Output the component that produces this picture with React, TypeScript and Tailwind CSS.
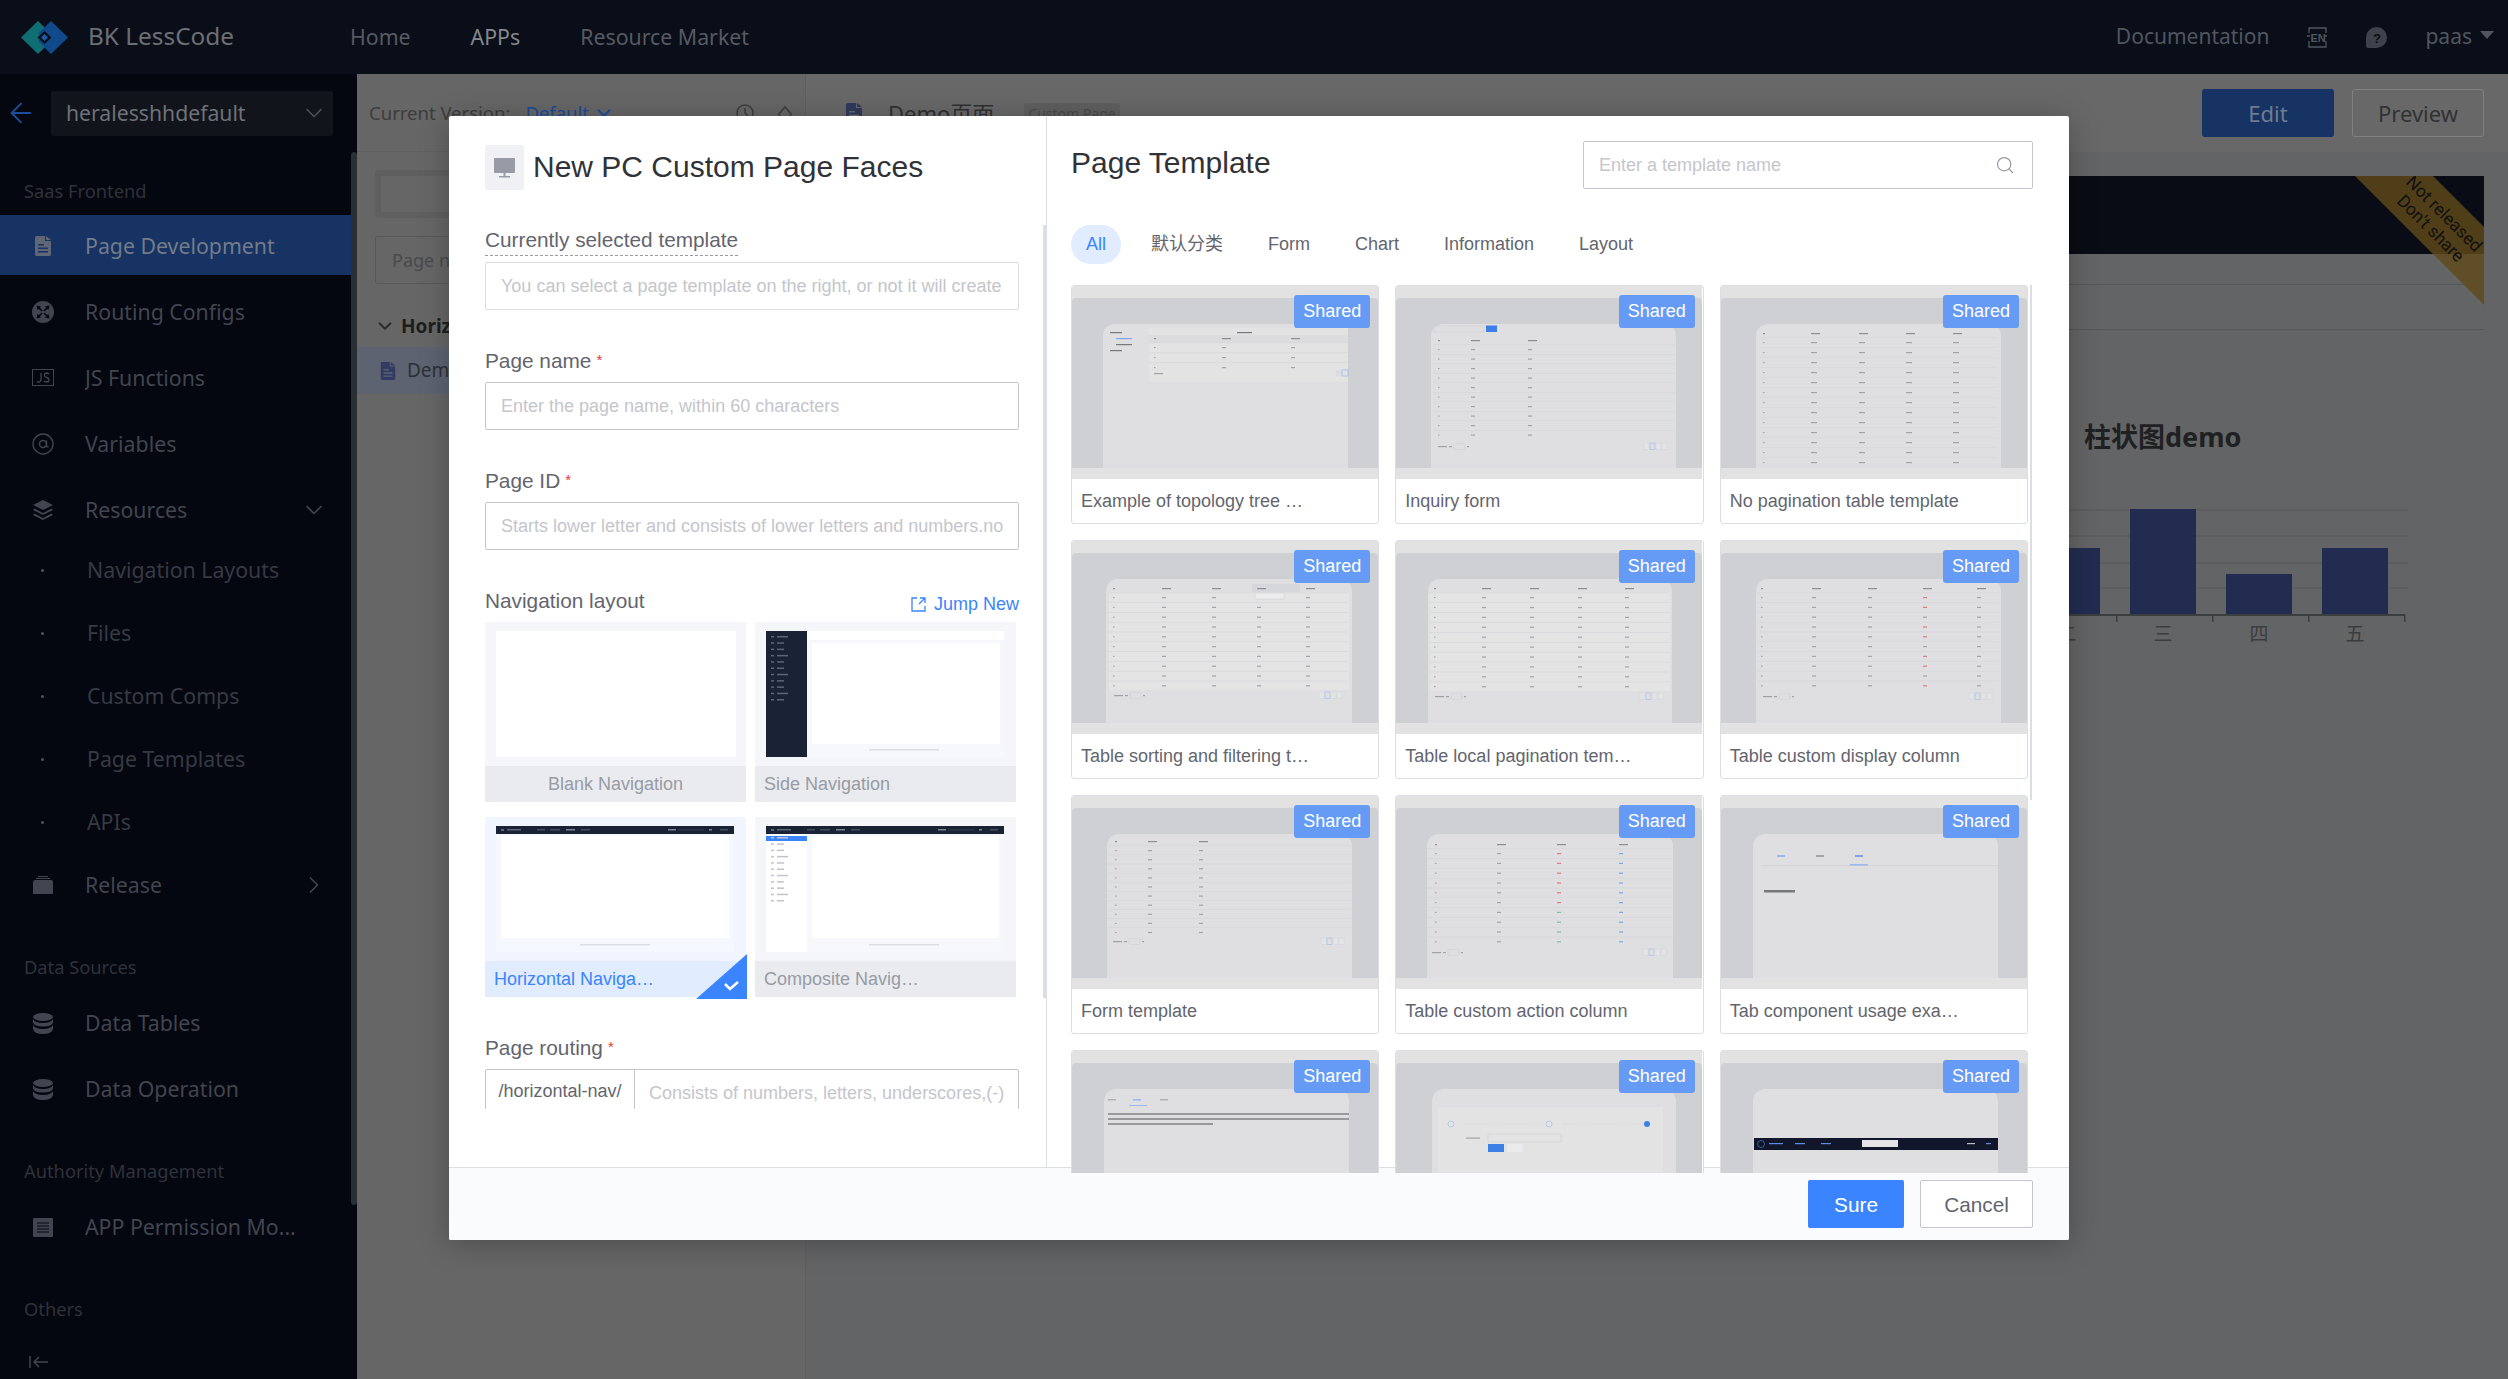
import React from "react";
import { ChevronDown, ChevronRight, ArrowLeft, Search } from "lucide-react";

const Doc = ({ c = "#5f6675", s = 20, ink = "#163363" }: { c?: string; s?: number; ink?: string }) => (
  <svg width={s} height={s} viewBox="0 0 16 20" fill={c}>
    <path d="M0 1.500A1.500 1.500 0 0 1 1.500 0H10v5h6v13.500a1.500 1.500 0 0 1-1.500 1.500h-13A1.500 1.500 0 0 1 0 18.500z" />
    <path d="M11 0l5 4h-5z" />
    <path d="M3 8h6v1.500H3zM3 11.500h10V13H3zM3 15h10v1.500H3z" fill={ink} />
  </svg>
);
const c = "#41454f";
const bg = "#04070f";
const Routing = () => (
  <svg width="22" height="22" viewBox="0 0 22 22">
    <circle cx="11" cy="11" r="11" fill={c} />
    <path d="M4.500 4.500l4.500 1-3.500 3.500zM17.500 4.500l-1 4.500-3.500-3.500zM4.500 17.500l1-4.500 3.500 3.500zM17.500 17.500l-4.500-1 3.500-3.500z" fill={bg} />
    <path d="M7 7l3 3M15 7l-3 3M7 15l3-3M15 15l-3-3" stroke={bg} strokeWidth="1.600" />
  </svg>
);
const Js = () => (
  <svg width="22" height="18" viewBox="0 0 22 18">
    <rect x=".5" y=".5" width="21" height="16" fill="none" stroke={c} />
    <path d="M9 4v6.500q0 2.500-2.500 2.500H5M17 5q-1-1-2.500-1-2 0-2 2t2.200 2.500 2.300 2.500q0 2-2.300 2-1.700 0-2.700-1" fill="none" stroke={c} strokeWidth="1.300" />
  </svg>
);
const At = () => (
  <svg width="22" height="22" viewBox="0 0 22 22" fill="none" stroke={c} strokeWidth="1.400">
    <circle cx="11" cy="11" r="10" />
    <circle cx="11" cy="11" r="3.500" />
    <path d="M14.500 7.500v5q0 2 2 1" />
  </svg>
);
const Layers = () => (
  <svg width="22" height="21" viewBox="0 0 22 21" fill={c}>
    <path d="M11 0l10 5-10 5L1 5z" />
    <path d="M2.500 8.500L11 13l8.500-4.500L21 10l-10 5L1 10z" />
    <path d="M2.500 13.500L11 18l8.500-4.500L21 15l-10 5L1 15z" />
  </svg>
);
const Box = () => (
  <svg width="20" height="18" viewBox="0 0 20 18" fill={c}>
    <rect x="5" y="0" width="10" height="1" />
    <rect x="3" y="2" width="14" height="1" />
    <path d="M0 6a2 2 0 0 1 2-2h16a2 2 0 0 1 2 2v12H0z" />
  </svg>
);
const Db = () => (
  <svg width="20" height="21" viewBox="0 0 20 21" fill={c}>
    <ellipse cx="10" cy="4" rx="10" ry="4" />
    <path d="M0 6q2 4 10 4t10-4v3.500q-1 4-10 4t-10-4z" />
    <path d="M0 12q2 4 10 4t10-4v4q-1 5-10 5T0 16z" />
  </svg>
);
const List = () => (
  <svg width="20" height="19" viewBox="0 0 20 19">
    <rect width="20" height="19" rx="1" fill={c} />
    <path d="M4 5h12M4 8h12M4 11h12M4 14h12" stroke={bg} strokeWidth="1.200" />
  </svg>
);

const NavRow = ({ icon, label, active, right }: { icon: React.ReactNode; label: string; active?: boolean; right?: React.ReactNode }) => (
  <div className={`flex h-[60px] items-center pr-[23px] pt-[2px] text-[21.300px] ${active ? "bg-[#163363] text-[#737b89]" : "text-[#41454f]"}`}>
    <span className="flex w-[85px] shrink-0 justify-center">
      <span className="flex w-[22px] justify-center">{icon}</span>
    </span>
    <span className="flex-1 truncate">{label}</span>
    {right}
  </div>
);
const SubRow = ({ label }: { label: string }) => (
  <div className="flex h-[63px] items-center pb-[1px] text-[21.300px] text-[#363a44]">
    <span className="flex w-[85px] shrink-0 justify-center">
      <span className="h-[3px] w-[3px] rounded-full bg-[#50545c]" />
    </span>
    <span className="ml-[2px]">{label}</span>
  </div>
);
const SecLabel = ({ label, cls }: { label: string; cls: string }) => (
  <div className={`flex h-[30px] items-center pl-[24px] text-[18.300px] text-[#2e323b] ${cls}`}>{label}</div>
);

const Sidebar = () => (
  <aside className="relative flex w-[357px] shrink-0 flex-col bg-[#04070f]">
    <div className="flex h-[78px] items-center gap-[14px] pl-[5px]">
      <ArrowLeft size={32} color="#1c4c9c" strokeWidth={1.400} />
      <div className="flex h-[45px] w-[282px] items-center justify-between rounded-[2px] bg-[#11141a] pl-[15px] pr-[5px] text-[21.200px] text-[#6e7178]">
        heralesshhdefault
        <ChevronDown size={28} color="#4b4e55" strokeWidth={1.500} />
      </div>
    </div>
    <div className="flex w-[351px] flex-col">
      <SecLabel label="Saas Frontend" cls="mt-[24px] mb-[9px]" />
      <div className="flex flex-col gap-[6px]">
        <NavRow active label="Page Development" icon={<Doc c="#5f6675" s={20} />} />
        <NavRow label="Routing Configs" icon={<Routing />} />
        <NavRow label="JS Functions" icon={<Js />} />
        <NavRow label="Variables" icon={<At />} />
        <NavRow label="Resources" icon={<Layers />} right={<ChevronDown size={28} color="#41454f" strokeWidth={1.500} />} />
      </div>
      <SubRow label="Navigation Layouts" />
      <SubRow label="Files" />
      <SubRow label="Custom Comps" />
      <SubRow label="Page Templates" />
      <SubRow label="APIs" />
      <NavRow label="Release" icon={<Box />} right={<ChevronRight size={28} color="#41454f" strokeWidth={1.500} />} />
      <SecLabel label="Data Sources" cls="mt-[38px] mb-[10px]" />
      <div className="flex flex-col gap-[6px]">
        <NavRow label="Data Tables" icon={<Db />} />
        <NavRow label="Data Operation" icon={<Db />} />
      </div>
      <SecLabel label="Authority Management" cls="mt-[38px] mb-[10px]" />
      <NavRow label="APP Permission Mo..." icon={<List />} />
      <SecLabel label="Others" cls="mt-[38px]" />
    </div>
    <div className="absolute left-[29px] top-[1281px]">
      <svg width="20" height="14" viewBox="0 0 20 14" fill="none" stroke="#41454f" strokeWidth="1.500">
        <path d="M1 1v12M19 7H5M10 2L5 7l5 5" />
      </svg>
    </div>
    <div className="absolute right-0 top-[78px] h-[1053px] w-[6px] rounded-[3px] bg-[#2a2e35]" />
  </aside>
);

const Header = () => (
  <header className="flex h-[74px] shrink-0 items-center bg-[#0a0e18] pl-[21px] pr-[14px]">
    <svg width="47" height="33" viewBox="0 0 47 33">
      <path d="M17 0l17 16.500L17 33 0 16.500z" fill="#0e6e72" />
      <path d="M30 0l17 16.500L30 33 17 20l4-3.500-4-4z" fill="#114a8a" />
      <path d="M23.500 10l7 6.500-7 6.500-7-6.500z" fill="#0a0e18" />
      <path d="M23.500 13l3.500 3.500-3.500 3.500-3.500-3.500z" fill="#1a5aa8" />
    </svg>
    <span className="mb-[2px] ml-[20px] w-[262px] text-[24.400px] text-[#6c6f74]">BK LessCode</span>
    <nav className="flex items-center gap-[60px] text-[21.300px]">
      <span className="text-[#565a62]">Home</span>
      <span className="text-[#85888d]">APPs</span>
      <span className="text-[#565a62]">Resource Market</span>
    </nav>
    <div className="ml-auto flex items-center text-[21px] text-[#505660]">
      <span>Documentation</span>
      <svg className="ml-[37px]" width="22" height="21" viewBox="0 0 22 21" fill="none" stroke="#505660" strokeWidth="1.300">
        <path d="M3 6V1h17v5M3 14v6h17v-6M1 9h3M18 9h3" />
        <text x="4.500" y="15" fontSize="11" fontWeight="700" fill="#505660" stroke="none" fontFamily="Liberation Sans">EN</text>
      </svg>
      <svg className="ml-[38px]" width="21" height="21" viewBox="0 0 21 21">
        <path d="M10.500 0a10.500 10.500 0 1 1 0 21H2q-2 0-2-2v-8.500A10.500 10.500 0 0 1 10.500 0z" fill="#3d424c" />
        <text x="7" y="15.500" fontSize="13" fontWeight="700" fill="#0a0e18" fontFamily="Liberation Sans">?</text>
      </svg>
      <span className="ml-[38px]">paas</span>
      <span className="ml-[8px] mt-[-4px] h-0 w-0 border-x-[7px] border-t-[8px] border-x-transparent border-t-[#505660]" />
    </div>
  </header>
);

const PageColumn = () => (
  <section className="flex w-[449px] shrink-0 flex-col border-r border-[#5f5f5f] bg-[#666666]">
    <div className="flex h-[78px] items-center whitespace-nowrap border-b border-[#5f5f5f] pl-[12px] text-[18.500px] text-[#3d3d3d]">
      <span className="shrink-0">Current Version:</span>
      <span className="ml-[15px] shrink-0 text-[#1b4a9c]">Default</span>
      <ChevronDown size={22} color="#1b4a9c" className="ml-[4px] shrink-0" />
      <svg className="ml-[120px] shrink-0" width="20" height="20" viewBox="0 0 20 20" fill="none" stroke="#3d3d3d" strokeWidth="1.500">
        <circle cx="10" cy="10" r="8" />
        <path d="M10 5v5l3 3" />
      </svg>
      <svg className="ml-[20px] shrink-0" width="20" height="20" viewBox="0 0 20 20" fill="none" stroke="#3d3d3d" strokeWidth="1.500">
        <path d="M3 12l7-8 7 8M5 12v6h10v-6" />
      </svg>
    </div>
    <div className="px-[18px] pt-[18px]">
      <div className="h-[48px] rounded-[4px] bg-[#5f5f5f] p-[6px] pr-0">
        <div className="h-full bg-[#666666]" />
      </div>
      <div className="mt-[18px] flex h-[48px] items-center rounded-[2px] border border-[#585858] pl-[16px] text-[18px] text-[#484a4d]">Page name</div>
    </div>
    <div className="mt-[27px] flex h-[30px] items-center pl-[17px] text-[19px] font-bold text-[#1d1e20]">
      <ChevronDown size={22} color="#2a2b2d" />
      <span className="ml-[5px]">Horizontal Nav</span>
    </div>
    <div className="mt-[6px] flex h-[47px] items-center bg-[#5d6371] pl-[22px] text-[19px] text-[#2e3035]">
      <Doc c="#333b63" s={18} ink="#5d6371" />
      <span className="ml-[10px]">Demo</span>
    </div>
  </section>
);

const Canvas = () => (
  <section className="flex min-w-0 flex-1 flex-col">
    <div className="flex h-[78px] shrink-0 items-center bg-[#686868] pl-[38px] pr-[24px]">
      <Doc c="#2f3a5c" s={20} ink="#686868" />
      <span className="ml-[24px] text-[22px] text-[#303133]">Demo页面</span>
      <span className="ml-[30px] rounded-[2px] bg-[#5f5f5f] px-[4px] text-[14px] text-[#4a4a4a]">Custom Page</span>
      <div className="ml-auto flex gap-[18px] text-[22px]">
        <div className="flex h-[48px] w-[132px] items-center justify-center rounded-[3px] bg-[#163363] text-[#6f7b90]">Edit</div>
        <div className="flex h-[48px] w-[132px] items-center justify-center rounded-[3px] border border-[#808080] text-[#313234]">Preview</div>
      </div>
    </div>
    <div className="flex flex-1 flex-col bg-[#636465] px-[24px] pt-[24px]">
      <div className="relative h-[78px] bg-[#090c14]">
        <svg className="absolute right-0 top-0" width="129" height="129" viewBox="0 0 129 129">
          <polygon points="0,0 78,0 129,51 129,78 78,78" fill="#4f3e17" />
          <polygon points="78,78 129,78 129,129" fill="#5f4e27" />
          <g fontFamily="Roboto, sans-serif" fontSize="17.500" fill="#111111" textAnchor="middle">
            <text transform="translate(85 42) rotate(45)">Not released</text>
            <text transform="translate(71.500 56.500) rotate(45)">Don't share</text>
          </g>
        </svg>
      </div>
      <div className="mt-[30px] h-[46px] border-y border-[#565758]" />
      <div className="relative ml-[1094px] mt-[85px]">
        <div className="flex h-[44px] items-center pl-[160px] text-[27px] font-bold text-[#1f2022]">柱状图demo</div>
        <svg className="mt-[36px]" width="490" height="150" viewBox="0 0 490 150">
          {[14, 40, 67, 92].map((y) => (
            <rect key={y} x="0" y={y} width="484" height="2" fill="#5c5d5e" />
          ))}
          {[[14, 53], [110, 53], [206, 14], [302, 79], [398, 53]].map(([x, y]) => (
            <rect key={x} x={x} y={y} width="66" height={119 - y} fill="#222c50" />
          ))}
          <rect x="0" y="119" width="480" height="2" fill="#3c3d3f" />
          {[0, 96, 192, 288, 384, 480].map((x) => (
            <rect key={x} x={x} y="119" width="1.500" height="8" fill="#3c3d3f" />
          ))}
          {[["一", 48], ["二", 143], ["三", 239], ["四", 335], ["五", 431]].map(([t, x]) => (
            <text key={t as string} x={x} y="146" fontSize="19" textAnchor="middle" fill="#3c3d3f" fontFamily="Noto Sans CJK SC">{t}</text>
          ))}
        </svg>
      </div>
    </div>
  </section>
);

const Label = ({ text, req }: { text: string; req?: boolean }) => (
  <div className="mb-[6px] flex h-[30px] items-center text-[20.800px] text-[#63656e]">
    {text}
    {req && <span className="ml-[5px] mt-[-2px] text-[15px] text-[#ea3636]">*</span>}
  </div>
);
const fieldCls = "h-[48px] w-full rounded-[2px] border border-[#c4c6cc] bg-white px-[15px] text-[18px] outline-none placeholder:text-[#c4c6cc]";

type NavKind = "blank" | "side" | "horizontal" | "composite";
const Rows = ({ x, col }: { x: number; col: string }) => (
  <g fill={col}>
    {[0, 1, 2, 3, 4, 5, 6, 7, 8, 9, 10].map((i) => (
      <g key={i}>
        <rect x={x} y={11 + i * 6.300} width="3" height="1.500" />
        <rect x={x + 6} y={11 + i * 6.300} width={i % 3 === 0 ? 11 : 7} height="1.500" />
      </g>
    ))}
  </g>
);
const TopBar = () => (
  <>
    <rect width="238" height="8" fill="#1a2236" />
    <rect x="5" y="3" width="3" height="2" fill="#5b6478" />
    <rect x="11" y="3" width="14" height="1.500" fill="#5b6478" />
    <rect x="41" y="3" width="8" height="1.500" fill="#444c60" />
    <rect x="54" y="3" width="10" height="1.500" fill="#444c60" />
    <rect x="70" y="3" width="9" height="1.500" fill="#7a8296" />
    <rect x="85" y="3" width="9" height="1.500" fill="#444c60" />
    <rect x="172" y="3" width="8" height="1.500" fill="#7a8296" />
    <rect x="182" y="3" width="26" height="1.500" fill="#2c3449" />
    <rect x="213" y="3" width="3" height="1.500" fill="#7a8296" />
    <rect x="224" y="3" width="8" height="1.500" fill="#444c60" />
  </>
);
const NavThumb = ({ kind }: { kind: NavKind }) => (
  <svg className="blur-[0.4px]" width="240" height="126" viewBox="0 0 240 126">
    {kind === "blank" && <rect width="240" height="126" fill="#fff" />}
    {kind === "side" && (
      <>
        <rect width="238" height="126" fill="#f7f8fb" />
        <rect x="41" width="197" height="9" fill="#fff" />
        <rect width="41" height="126" fill="#1a2236" />
        <g transform="translate(0 -6)">
          <Rows x={5} col="#5b6478" />
        </g>
        <rect x="46" y="12" width="188" height="101" fill="#fff" />
        <rect x="103" y="118" width="70" height="1.500" fill="#dcdde2" />
      </>
    )}
    {kind === "horizontal" && (
      <>
        <rect width="238" height="126" fill="#f5f8ff" />
        <TopBar />
        <rect x="5" y="10" width="228" height="102" fill="#fff" />
        <rect x="84" y="118" width="70" height="1.500" fill="#dcdde2" />
      </>
    )}
    {kind === "composite" && (
      <>
        <rect width="238" height="126" fill="#f7f8fb" />
        <TopBar />
        <rect y="8" width="41" height="118" fill="#fff" />
        <rect y="10" width="41" height="5" fill="#3a84ff" />
        <Rows x={5} col="#c2c4cb" />
        <rect x="46" y="10" width="187" height="102" fill="#fff" />
        <rect x="103" y="118" width="70" height="1.500" fill="#dcdde2" />
      </>
    )}
  </svg>
);
const NavCard = ({ kind, label, selected, center }: { kind: NavKind; label: string; selected?: boolean; center?: boolean }) => (
  <div className={`relative flex h-[180px] flex-col ${selected ? "bg-[#f0f5ff]" : "bg-[#f5f6fa]"}`}>
    <div className="flex h-[144px] justify-center pt-[9px]">
      <NavThumb kind={kind} />
    </div>
    <div className={`flex h-[36px] items-center px-[9px] text-[18px] ${center ? "justify-center" : ""} ${selected ? "bg-[#e1ecff] text-[#3a84ff]" : "bg-[#eaebef] text-[#979ba5]"}`}>{label}</div>
    {selected && (
      <svg className="absolute -bottom-[2px] -right-[1px]" width="51" height="45" viewBox="0 0 51 45">
        <polygon points="51,0 51,45 0,45" fill="#3a84ff" />
        <path d="M29 30l5 5 8-7" fill="none" stroke="#fff" strokeWidth="2.500" />
      </svg>
    )}
  </div>
);

const LeftPanel = () => (
  <div className="relative flex w-[598px] shrink-0 flex-col border-r border-[#dcdee5]">
    <div className="flex h-[109px] items-start pl-[36px] pt-[29px]">
      <div className="flex h-[45px] w-[39px] items-center justify-center rounded-[2px] bg-[#f0f1f5]">
        <svg width="21" height="20" viewBox="0 0 21 20" fill="#979ba5">
          <rect width="21" height="15" rx="1" />
          <rect x="9.500" y="15" width="2" height="3" />
          <rect x="5" y="18" width="11" height="1.500" />
        </svg>
      </div>
      <h2 className="ml-[9px] mt-[3px] text-[30px] leading-[38px] text-[#313238]">New PC Custom Page Faces</h2>
    </div>
    <div className="h-[884px] overflow-hidden pl-[36px] pr-[27px]">
      <div className="flex h-[30px] items-center">
        <span className="border-b border-dashed border-[#979ba5] text-[20.800px] leading-[30px] text-[#63656e]">Currently selected template</span>
      </div>
      <input disabled className={`${fieldCls} mt-[7px] border-[#dcdee5] bg-[#fafbfd]`} placeholder="You can select a page template on the right, or not it will create" />
      <div className="mt-[36px]">
        <Label text="Page name" req />
        <input className={fieldCls} placeholder="Enter the page name, within 60 characters" />
      </div>
      <div className="mt-[36px]">
        <Label text="Page ID" req />
        <input className={fieldCls} placeholder="Starts lower letter and consists of lower letters and numbers.no" />
      </div>
      <div className="mt-[36px]">
        <div className="mb-[6px] flex h-[30px] items-center justify-between text-[20.800px] text-[#63656e]">
          Navigation layout
          <span className="flex items-center gap-[8px] pt-[6px] text-[18px] text-[#3a84ff]">
            <svg width="15" height="15" viewBox="0 0 15 15" fill="none" stroke="#3a84ff" strokeWidth="1.300">
              <path d="M6 1H1v13h13V9M8 7l6-6M9 1h5v5" />
            </svg>
            Jump New
          </span>
        </div>
        <div className="grid w-[531px] grid-cols-2 gap-x-[9px] gap-y-[15px]">
          <NavCard kind="blank" label="Blank Navigation" center />
          <NavCard kind="side" label="Side Navigation" />
          <NavCard kind="horizontal" label="Horizontal Naviga…" selected />
          <NavCard kind="composite" label="Composite Navig…" />
        </div>
      </div>
      <div className="mt-[36px]">
        <Label text="Page routing" req />
        <div className="flex h-[48px] rounded-[2px] border border-[#c4c6cc] text-[18px]">
          <span className="flex w-[149px] shrink-0 items-center justify-center border-r border-[#c4c6cc] pb-[4px] text-[#63656e]">/horizontal-nav/</span>
          <input className="min-w-0 flex-1 px-[14px] text-[18px] outline-none placeholder:text-[#c4c6cc]" placeholder="Consists of numbers, letters, underscores,(-)" />
        </div>
      </div>
    </div>
    <div className="absolute right-0 top-[109px] h-[773px] w-[3px] bg-[#dcdee5]" />
  </div>
);

type Variant = "tree" | "search" | "plain" | "sort" | "local" | "custom" | "form" | "action" | "tab" | "tabtext" | "steps" | "nav";

const panels: Record<Variant, [number, number]> = {
  tree: [31, 276],
  search: [35, 280],
  plain: [35, 280],
  sort: [34, 280],
  local: [32, 276],
  custom: [35, 280],
  form: [35, 280],
  action: [31, 277],
  tab: [32, 277],
  tabtext: [32, 277],
  steps: [36, 280],
  nav: [32, 277],
};

const Pager = ({ x0, x1, y }: { x0: number; x1: number; y: number }) => (
  <g>
    <rect x={x0 + 5} y={y} width="9" height="1.200" fill="#a0a1a5" />
    <rect x={x0 + 16} y={y} width="3" height="1.200" fill="#a0a1a5" />
    <rect x={x0 + 21} y={y - 2.500} width="11" height="6" rx="1" fill="none" stroke="#d0d1d5" strokeWidth="0.600" />
    <rect x={x0 + 34} y={y} width="2" height="1.200" fill="#a0a1a5" />
    {[0, 1, 2, 3].map((i) => (
      <rect key={i} x={x1 - 30 + i * 6} y={y - 3} width="5" height="6.500" fill={i === 1 ? "none" : "#e4e4e6"} stroke={i === 1 ? "#9dbcec" : "#d5d6d9"} strokeWidth="0.600" />
    ))}
  </g>
);

const Table = ({ x0, x1, head, n, step, cols, colors, pager, band, wide }: { x0: number; x1: number; head: number; n: number; step: number; cols: number[]; colors?: Record<number, string[]>; pager?: number; band?: boolean; wide?: boolean }) => (
  <g>
    {band && <rect x={x0} y={head + 4} width={x1 - x0} height={n * step} fill="#e4e4e5" />}
    {Array.from({ length: n }).map((_, i) => {
      const y = head + 9 + i * step;
      return (
        <g key={i}>
          <rect x={x0} y={y - 4.500} width={x1 - x0} height="0.600" fill="#d4d5d8" />
          {cols.map((cx, j) => {
            const list = colors && colors[j];
            return <rect key={j} x={cx} y={y} width={j === 0 ? 1.500 : wide && j > 0 ? 6 : 4} height="1.200" fill={list ? list[i % list.length] : "#a3a4a8"} />;
          })}
        </g>
      );
    })}
    {cols.map((cx, j) => (
      <rect key={j} x={cx} y={head} width={j === 0 ? 2 : 9} height="1.200" fill="#8d8e93" />
    ))}
    {pager !== undefined && <Pager x0={x0} x1={x1} y={pager} />}
  </g>
);

const red = "#e07c7c";
const green = "#7cc4a0";
const blue = "#7ea6e8";

const Thumb = ({ v }: { v: Variant }) => {
  const [a, b] = panels[v];
  return (
    <svg className="absolute inset-0 blur-[0.25px]" width="306" height="193" viewBox="0 0 306 193">
      <rect width="306" height="193" fill="#e2e2e2" />
      <path d="M0 16a4 4 0 0 1 4-4h298a4 4 0 0 1 4 4v166H0z" fill="#cfd0d4" />
      <path d={`M${a} 182V50a12 12 0 0 1 12-12h${b - a - 24}a12 12 0 0 1 12 12v132z`} fill="#dfdfe1" />
      {v === "tree" && (
        <g>
          <rect x="77" y="42" width="199" height="54" fill="#e3e3e4" />
          <rect x="38" y="46" width="12" height="1.200" fill="#77787d" />
          <rect x="44" y="52" width="16" height="1.200" fill="#7ea6e8" />
          <rect x="44" y="58" width="16" height="1.200" fill="#77787d" />
          <rect x="38" y="64" width="12" height="1.200" fill="#77787d" />
          <rect x="165" y="46" width="15" height="1.200" fill="#77787d" />
          <rect x="77" y="49" width="199" height="8" fill="#dcdcde" />
          <Table x0={77} x1={276} head={52} n={3} step={10} cols={[82, 150, 219]} />
          <rect x="82" y="87" width="9" height="1.200" fill="#a3a4a8" />
          <rect x="264" y="84" width="5" height="6" fill="#dcdcde" />
          <rect x="270" y="84" width="6" height="6" fill="none" stroke="#9dbcec" strokeWidth="0.800" />
        </g>
      )}
      {v === "search" && (
        <g>
          <rect x="38" y="40" width="50" height="6" fill="none" stroke="#d0d1d5" strokeWidth="0.600" />
          <rect x="90" y="39.500" width="11" height="6.500" fill="#3e7fe6" />
          <Table x0={37} x1={278} head={54} n={10} step={9.500} cols={[42, 75, 132]} pager={160} />
        </g>
      )}
      {v === "plain" && <Table x0={38} x1={277} head={47} n={13} step={10} cols={[42, 90, 138, 185, 232]} wide />}
      {v === "sort" && (
        <g>
          <Table x0={37} x1={277} head={47} n={10} step={9.800} cols={[41, 90, 140, 185, 234]} band pager={154} />
          <rect x="180" y="43" width="48" height="8" fill="#d6d7da" />
          <rect x="185" y="47" width="9" height="1.200" fill="#8d8e93" />
          <rect x="183" y="52" width="29" height="6" fill="#ececee" stroke="#cfd0d3" strokeWidth="0.600" />
        </g>
      )}
      {v === "local" && <Table x0={34} x1={274} head={47} n={10} step={9.900} cols={[38, 86, 134, 182, 229]} band pager={155} />}
      {v === "custom" && <Table x0={37} x1={278} head={47} n={10} step={9.800} cols={[40, 91, 147, 202, 256]} colors={{ 3: [red, red, "#a3a4a8"] }} pager={155} />}
      {v === "form" && <Table x0={36} x1={279} head={45} n={10} step={9.100} cols={[43, 76, 127]} pager={145} />}
      {v === "action" && <Table x0={31} x1={277} head={48} n={10} step={9.800} cols={[39, 101, 161, 223]} colors={{ 2: [red, red, red, red, red, red, green, green, green, green], 3: [blue] }} pager={156} />}
      {v === "tab" && (
        <g>
          <rect x="56" y="59" width="8" height="2" fill="#9ab8ea" />
          <rect x="95" y="59" width="8" height="2" fill="#a3a4a8" />
          <rect x="134" y="59" width="8" height="2" fill="#7ea6e8" />
          <rect x="40" y="69" width="237" height="0.600" fill="#cccdd1" />
          <rect x="129" y="68" width="18" height="1.500" fill="#9ab8ea" />
          <rect x="43" y="94" width="31" height="2.500" fill="#77787d" />
        </g>
      )}
      {v === "tabtext" && (
        <g>
          <rect x="36" y="48" width="8" height="1.500" fill="#b0b1b5" />
          <rect x="61" y="48" width="8" height="1.500" fill="#9ab8ea" />
          <rect x="88" y="48" width="8" height="1.500" fill="#b0b1b5" />
          <rect x="57" y="54" width="18" height="1" fill="#9ab8ea" />
          <rect x="36" y="62" width="241" height="2" fill="#99999d" />
          <rect x="36" y="67" width="241" height="2" fill="#99999d" />
          <rect x="36" y="72" width="105" height="2" fill="#99999d" />
        </g>
      )}
      {v === "steps" && (
        <g>
          <rect x="42" y="56" width="225" height="137" fill="#e3e3e4" />
          <circle cx="55" cy="73" r="3" fill="none" stroke="#9ab8ea" strokeWidth="0.600" />
          <circle cx="153" cy="73" r="3" fill="none" stroke="#9ab8ea" strokeWidth="0.600" />
          <circle cx="251" cy="73" r="3" fill="#3e7fe6" />
          <path d="M68 73h80M166 73h80" stroke="#d6d7da" strokeWidth="1.200" strokeDasharray="1.500 1" />
          <rect x="92" y="83" width="73" height="8" fill="none" stroke="#d0d1d5" strokeWidth="0.600" />
          <rect x="70" y="86.500" width="14" height="1.200" fill="#a3a4a8" />
          <rect x="92" y="93" width="16" height="8" fill="#3e7fe6" />
          <rect x="111" y="93" width="16" height="8" fill="#ebebed" />
        </g>
      )}
      {v === "nav" && (
        <g>
          <rect x="33" y="87" width="244" height="12" fill="#11162a" />
          <circle cx="40" cy="93" r="3.500" fill="none" stroke="#4a86d8" strokeWidth="0.600" />
          <rect x="48" y="92" width="14" height="1.200" fill="#5d8ee0" />
          <rect x="74" y="92" width="10" height="1.200" fill="#5d8ee0" />
          <rect x="100" y="92" width="10" height="1.200" fill="#5d8ee0" />
          <rect x="141" y="89" width="36" height="7" fill="#e4e4e6" />
          <rect x="246" y="92" width="8" height="1.200" fill="#bdbdc2" />
          <rect x="265" y="92" width="5" height="1.200" fill="#5d8ee0" />
        </g>
      )}
    </svg>
  );
};

const templates: { name?: string; v: Variant }[] = [
  { name: "Example of topology tree …", v: "tree" },
  { name: "Inquiry form", v: "search" },
  { name: "No pagination table template", v: "plain" },
  { name: "Table sorting and filtering t…", v: "sort" },
  { name: "Table local pagination tem…", v: "local" },
  { name: "Table custom display column", v: "custom" },
  { name: "Form template", v: "form" },
  { name: "Table custom action column", v: "action" },
  { name: "Tab component usage exa…", v: "tab" },
  { v: "tabtext" },
  { v: "steps" },
  { v: "nav" },
];

const TemplateCard = ({ name, v }: { name?: string; v: Variant }) => (
  <div className="h-[239px] overflow-hidden rounded-[3px] border border-[#dcdee5] bg-white">
    <div className="relative h-[192px]">
      <Thumb v={v} />
      <span className="absolute right-[8px] top-[9px] flex h-[33px] w-[76px] items-center justify-center rounded-[3px] bg-[#659bf5] text-[18px] text-white">Shared</span>
    </div>
    {name && <div className="flex h-[45px] items-center pl-[9px] pt-[2px] text-[18px] text-[#63656e]">{name}</div>}
  </div>
);

const RightPanel = () => (
  <div className="relative z-10 -mb-[6px] flex min-w-0 flex-1 flex-col pl-[24px]">
    <div className="flex h-[109px] shrink-0 pr-[36px] pt-[25px]">
      <h2 className="pt-[2px] text-[30px] leading-[40px] text-[#313238]">Page Template</h2>
      <div className="relative ml-auto h-[48px] w-[450px] rounded-[2px] border border-[#c4c6cc] bg-white">
        <input className="h-full w-full rounded-[2px] px-[15px] text-[18px] outline-none placeholder:text-[#c4c6cc]" placeholder="Enter a template name" />
        <Search size={20} color="#979ba5" className="absolute right-[17px] top-[13px]" strokeWidth={1.500} />
      </div>
    </div>
    <div className="flex h-[60px] shrink-0 items-start text-[18px] text-[#63656e]">
      <span className="flex h-[39px] w-[50px] items-center justify-center rounded-full bg-[#e1ecff] text-[#3a84ff]">All</span>
      <span className="ml-[30px] flex h-[39px] items-center">默认分类</span>
      <span className="ml-[45px] flex h-[39px] items-center">Form</span>
      <span className="ml-[45px] flex h-[39px] items-center">Chart</span>
      <span className="ml-[45px] flex h-[39px] items-center">Information</span>
      <span className="ml-[45px] flex h-[39px] items-center">Layout</span>
    </div>
    <div className="relative h-[888px] overflow-hidden">
      <div className="grid w-[957px] grid-cols-3 gap-x-[16px] gap-y-[16px]">
        {templates.map((t) => (
          <TemplateCard key={t.v} name={t.name} v={t.v} />
        ))}
      </div>
      <div className="absolute right-[37px] top-0 h-[515px] w-[2px] bg-[#dcdee5]" />
    </div>
  </div>
);

const Modal = () => (
  <div className="absolute left-[449px] top-[116px] flex h-[1124px] w-[1620px] flex-col rounded-[2px] bg-white font-['Liberation_Sans','Noto_Sans_CJK_SC',sans-serif] shadow-[0_4px_30px_rgba(0,0,0,0.25)]">
    <div className="flex min-h-0 flex-1">
      <LeftPanel />
      <RightPanel />
    </div>
    <div className="flex h-[73px] shrink-0 items-start justify-end gap-[16px] rounded-b-[2px] border-t border-[#dcdee5] bg-[#fafbfd] pr-[36px] pt-[12px] text-[20.800px]">
      <button className="h-[48px] w-[96px] rounded-[2px] bg-[#3a84ff] pt-[1px] text-white">Sure</button>
      <button className="h-[48px] w-[113px] rounded-[2px] border border-[#c4c6cc] bg-white pt-[1px] text-[#63656e]">Cancel</button>
    </div>
  </div>
);

export default function App() {
  return (
    <div className="relative h-[1379px] w-[2508px] overflow-hidden bg-[#666666] font-['Noto_Sans','Noto_Sans_CJK_SC',sans-serif]">
      <div className="flex h-full flex-col">
        <Header />
        <div className="flex min-h-0 flex-1">
          <Sidebar />
          <PageColumn />
          <Canvas />
        </div>
      </div>
      <Modal />
    </div>
  );
}
